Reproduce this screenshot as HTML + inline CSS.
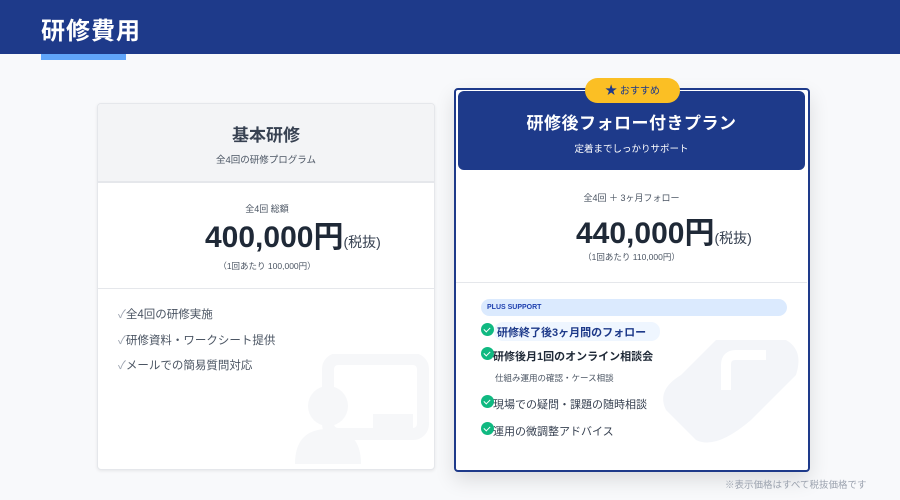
<!DOCTYPE html>
<html><head><meta charset="utf-8"><style>
*{margin:0;padding:0;box-sizing:border-box}
body{width:900px;height:500px;background:#f8f9fb;font-family:"Liberation Sans","Noto Sans CJK JP",sans-serif;position:relative;overflow:hidden;color:#374151}
.hdr{position:absolute;left:0;top:0;width:900px;height:54px;background:#1e3a8a}
.hdr h1{position:absolute;left:41px;top:11px;font-size:24px;color:#fff;font-weight:bold;letter-spacing:1px}
.acc{position:absolute;left:41px;top:54px;width:85px;height:6px;background:#60a5fa}
.c1{position:absolute;left:97px;top:103px;width:338px;height:367px;background:#fff;border:1px solid #e5e7eb;border-radius:4px;box-shadow:0 1px 3px rgba(0,0,0,.08);overflow:hidden}
.c1h{height:79px;background:#f3f4f6;border-bottom:2px solid #e5e7eb;text-align:center}
.t1{padding-top:17px;font-size:17px;font-weight:bold;color:#374151}
.s1{font-size:9.5px;color:#4b5563;margin-top:6px}
.abs{position:absolute;white-space:nowrap}
.c2{position:absolute;left:454px;top:88px;width:356px;height:384px;background:#fff;border:2.5px solid #1e3a8a;border-radius:4px;box-shadow:0 8px 20px rgba(0,0,0,.12)}
.c2h{position:absolute;left:2px;top:1px;width:347px;height:79px;background:#1e3a8a;border-radius:6px;text-align:center;color:#fff}
.badge{position:absolute;left:585px;top:78px;width:95px;height:25px;background:#fbbf24;border-radius:13px;font-size:10px;color:#1e3a8a;text-align:center;line-height:25px}
.chk{position:absolute;width:13px;height:13px;border-radius:50%;background:#10b981}
.chk:after{content:"";position:absolute;left:4px;top:2.5px;width:3px;height:5px;border:solid #fff;border-width:0 1.6px 1.6px 0;transform:rotate(45deg)}
</style></head><body>
<div class="hdr"><h1>研修費用</h1></div>
<div class="acc"></div>

<div class="c1">
 <div class="c1h"><div class="t1">基本研修</div><div class="s1">全4回の研修プログラム</div></div>
 <div class="abs" style="left:0;width:338px;top:98px;text-align:center;font-size:9px;color:#4b5563">全4回 総額</div>
 <div class="abs" style="left:107px;top:108px;font-size:30px;font-weight:bold;color:#1f2937">400,000円<span style="font-size:14px;font-weight:normal;color:#374151">(税抜)</span></div>
 <div class="abs" style="left:0;width:338px;top:156px;text-align:center;font-size:8.5px;color:#4b5563">（1回あたり 100,000円）</div>
 <div class="abs" style="left:0;top:184px;width:338px;height:1px;background:#e5e7eb"></div>
 <div class="abs" style="left:20px;top:199px;font-size:11.5px;color:#4b5563;line-height:25.5px"><span style="color:#9ca3af">✓</span>全4回の研修実施<br><span style="color:#9ca3af">✓</span>研修資料・ワークシート提供<br><span style="color:#9ca3af">✓</span>メールでの簡易質問対応</div>
 <svg class="abs" style="left:195px;top:250px" width="140" height="115" viewBox="0 0 140 115"><rect x="35" y="5" width="95" height="75" rx="10" fill="none" stroke="#f6f7f9" stroke-width="12"/><rect x="80" y="60" width="40" height="25" fill="#f6f7f9"/><circle cx="35" cy="52" r="20" fill="#f6f7f9"/><path d="M2 110 Q2 75 35 75 Q68 75 68 110Z" fill="#f6f7f9"/></svg>
</div>

<div class="c2">
 <div class="c2h"><div style="padding-top:18px;font-size:17px;font-weight:bold;letter-spacing:.5px">研修後フォロー付きプラン</div><div style="font-size:9.5px;margin-top:7px">定着までしっかりサポート</div></div>
 <div class="abs" style="left:0;width:351px;top:101px;text-align:center;font-size:9px;color:#4b5563">全4回 ＋ 3ヶ月フォロー</div>
 <div class="abs" style="left:120px;top:118px;font-size:30px;font-weight:bold;color:#1f2937">440,000円<span style="font-size:14px;font-weight:normal;color:#374151">(税抜)</span></div>
 <div class="abs" style="left:0;width:351px;top:161px;text-align:center;font-size:8.5px;color:#4b5563">（1回あたり 110,000円）</div>
 <div class="abs" style="left:0;top:192px;width:351px;height:1px;background:#e5e7eb"></div>
 <svg class="abs" style="left:200px;top:240px" width="150" height="120" viewBox="0 0 150 120"><path d="M60 10 L130 10 Q148 20 140 45 L95 90 Q60 120 40 110 L10 80 Q0 60 25 45 Z" fill="#f3f5f9"/><path d="M70 60 L70 35 Q70 25 80 25 L110 25" stroke="#fff" stroke-width="10" fill="none"/></svg>
 <div class="abs" style="left:25px;top:209px;width:306px;height:17px;background:#dbeafe;border-radius:9px;font-size:7px;font-weight:bold;color:#1e40af;padding-left:6px;line-height:17px">PLUS SUPPORT</div>
 <div class="abs" style="left:38px;top:232px;width:166px;height:19px;background:#eff6ff;border-radius:9px"></div>
 <div class="chk" style="left:25px;top:233px"></div><div class="abs" style="left:41px;top:234px;font-size:11px;font-weight:bold;color:#1e3a8a">研修終了後3ヶ月間のフォロー</div>
 <div class="chk" style="left:25px;top:257px"></div><div class="abs" style="left:37px;top:258px;font-size:11px;font-weight:bold;color:#1f2937">研修後月1回のオンライン相談会</div>
 <div class="abs" style="left:39px;top:282px;font-size:8.5px;color:#4b5563">仕組み運用の確認・ケース相談</div>
 <div class="chk" style="left:25px;top:305px"></div><div class="abs" style="left:37px;top:306px;font-size:11px;color:#374151">現場での疑問・課題の随時相談</div>
 <div class="chk" style="left:25px;top:332px"></div><div class="abs" style="left:37px;top:333px;font-size:11px;color:#374151">運用の微調整アドバイス</div>
</div>
<div class="badge"><span style="font-size:12px">★</span> おすすめ</div>
<div class="abs" style="left:725px;top:477px;font-size:9.5px;color:#9ca3af">※表示価格はすべて税抜価格です</div>
</body></html>
